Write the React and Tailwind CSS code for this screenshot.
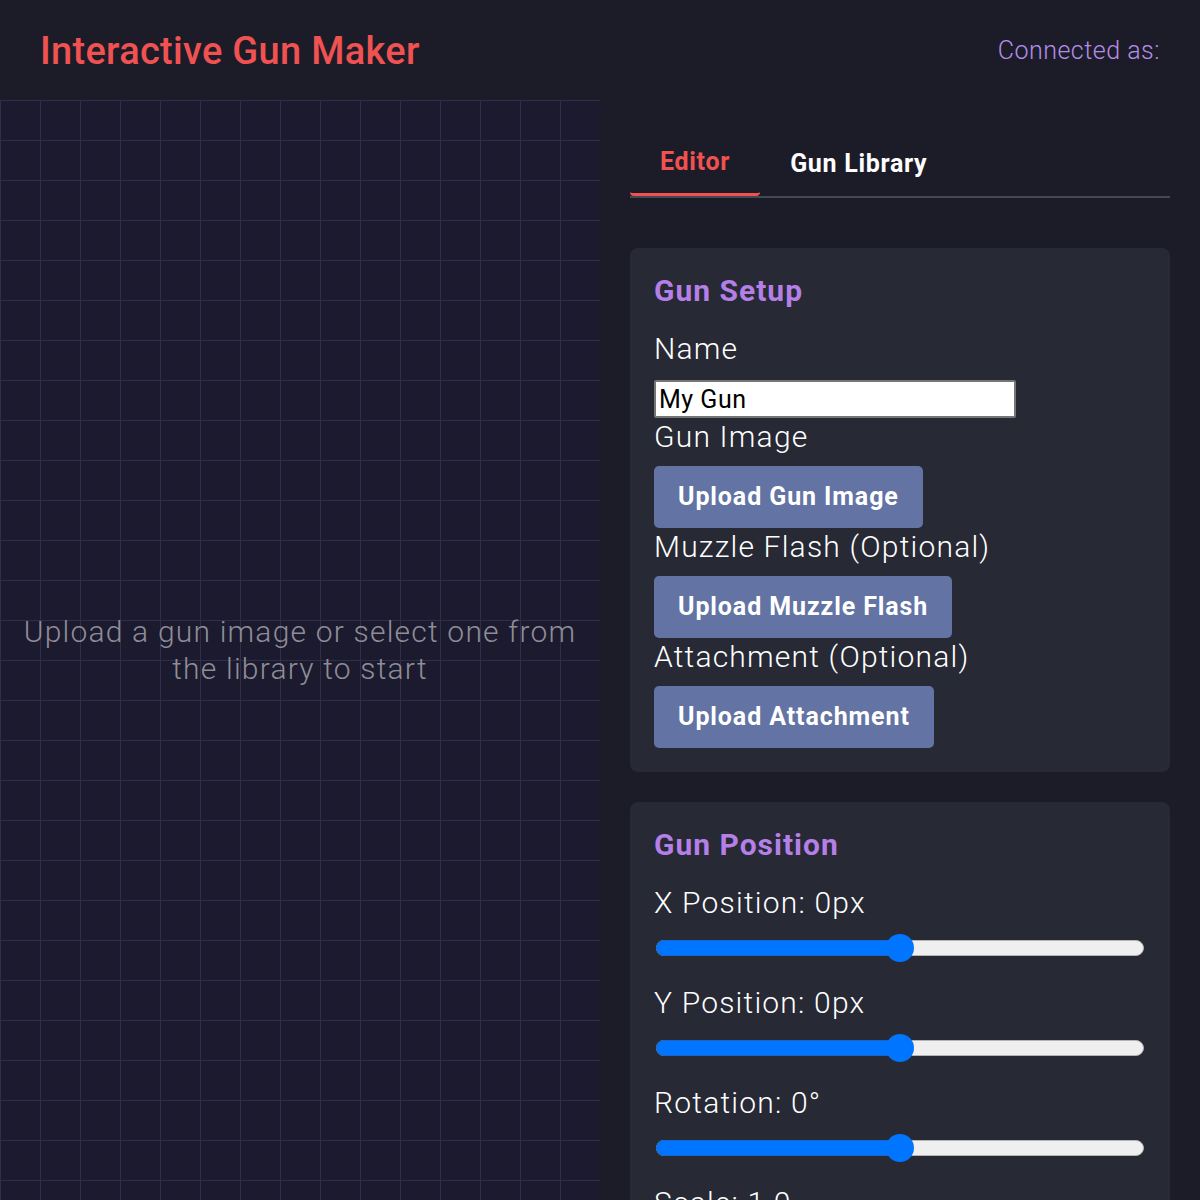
import React from "react";

const font = { fontFamily: "Roboto, 'Noto Sans', sans-serif" };

function RangeRow({ label, pct = 50 }) {
  return (
    <div className="mb-[10px]">
      <div className="h-[38px] text-[30px] leading-[38px] font-light tracking-[1.2px] text-white">{label}</div>
      <div className="h-[52px] flex items-center">
        <div className="relative w-[488px] h-[16px] ml-[2px]">
          <div className="absolute inset-0 rounded-full bg-[#efefef] border border-[#b4b4b4]" />
          <div
            className="absolute left-0 top-0 bottom-0 rounded-l-full bg-[#0075ff] border border-r-0 border-[#1d64c8]"
            style={{ width: `${pct}%` }}
          />
          <div
            className="absolute top-1/2 w-[28px] h-[28px] -translate-x-1/2 -translate-y-1/2 rounded-full bg-[#0075ff]"
            style={{ left: `${pct}%` }}
          />
        </div>
      </div>
    </div>
  );
}

function UploadButton({ children }) {
  return (
    <button className="mt-[10px] h-[62px] px-[24px] rounded-[5px] bg-[#6273a4] text-white text-[25px] font-bold tracking-[0.9px]">
      {children}
    </button>
  );
}

function Label({ children }) {
  return (
    <div className="h-[38px] text-[30px] leading-[38px] font-light tracking-[1.2px] text-white">{children}</div>
  );
}

export default function App() {
  return (
    <div className="w-[1200px] h-[1200px] overflow-hidden bg-[#1c1c28] flex flex-col" style={font}>
      <header className="h-[100px] shrink-0 flex items-center justify-between px-[40px] pt-[2px]">
        <h1 className="text-[38px] font-medium text-[#f05252] tracking-[0.3px]">Interactive Gun Maker</h1>
        <div className="text-[25px] font-light text-[#b48ce8] tracking-[0.5px]">Connected as:</div>
      </header>

      <div className="flex flex-1 min-h-0">
        <main className="w-[600px] shrink-0 bg-[#1c1a2e] bg-[linear-gradient(to_right,#312f47_1px,transparent_1px),linear-gradient(to_bottom,#312f47_1px,transparent_1px)] bg-size-[40px_40px] flex items-center justify-center">
          <p className="text-center text-[30px] leading-[37px] font-light tracking-[1.2px] text-[#8e8d97]">
            Upload a gun image or select one from
            <br />
            the library to start
          </p>
        </main>

        <aside className="flex-1 px-[30px] pt-[30px]">
          <nav className="flex border-b-2 border-[#454752]">
            <button className="px-[30px] pt-[15px] pb-[15px] text-[25px] leading-[33px] font-bold tracking-[0.7px] text-[#f05252] border-b-[3px] border-[#f05252] rounded-b-[4px]">
              Editor
            </button>
            <button className="px-[30px] pt-[17px] pb-[16px] text-[25px] leading-[33px] font-bold tracking-[0.7px] text-white">
              Gun Library
            </button>
          </nav>

          <section className="mt-[50px] rounded-[8px] bg-[#272935] px-[24px] pt-[24px] pb-[24px]">
            <h2 className="h-[38px] text-[30px] leading-[38px] font-bold tracking-[1px] text-[#b47fe6]">Gun Setup</h2>
            <div className="mt-[20px]">
              <Label>Name</Label>
              <input
                defaultValue="My Gun"
                className="mt-[12px] block w-[362px] h-[38px] bg-white text-black text-[25px] tracking-[0.5px] px-[3px] border-2 border-[#767676] rounded-[2px]"
              />
              <Label>Gun Image</Label>
              <UploadButton>Upload Gun Image</UploadButton>
              <Label>Muzzle Flash (Optional)</Label>
              <UploadButton>Upload Muzzle Flash</UploadButton>
              <Label>Attachment (Optional)</Label>
              <UploadButton>Upload Attachment</UploadButton>
            </div>
          </section>

          <section className="mt-[30px] rounded-[8px] bg-[#272935] px-[24px] pt-[24px] pb-[24px]">
            <h2 className="h-[38px] text-[30px] leading-[38px] font-bold tracking-[1px] text-[#b47fe6]">Gun Position</h2>
            <div className="mt-[20px]">
              <RangeRow label="X Position: 0px" />
              <RangeRow label="Y Position: 0px" />
              <RangeRow label="Rotation: 0°" />
              <RangeRow label="Scale: 1.0" />
            </div>
          </section>
        </aside>
      </div>
    </div>
  );
}
